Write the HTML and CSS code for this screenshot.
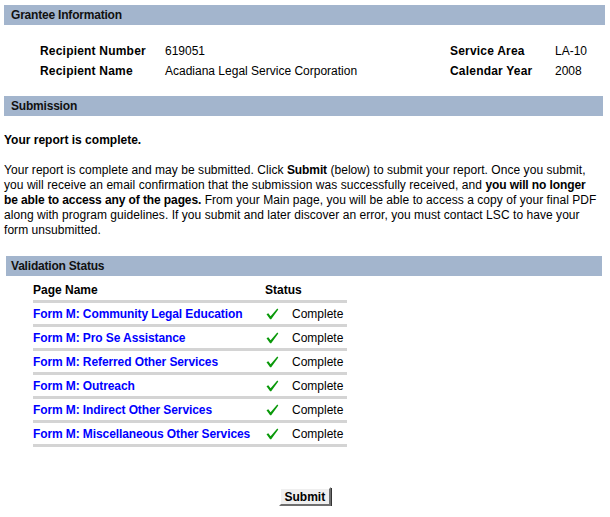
FILE: index.html
```html
<!DOCTYPE html>
<html>
<head>
<meta charset="utf-8">
<link rel="stylesheet" href="styles.css">
</head>
<body>
<div class="page">
  <div class="bar bar-grantee">Grantee Information</div>
  <div class="info">
    <div class="lbl">Recipient Number</div><div class="val">619051</div>
    <div class="lbl">Service Area</div><div class="val">LA-10</div>
    <div class="lbl">Recipient Name</div><div class="val">Acadiana Legal Service Corporation</div>
    <div class="lbl">Calendar Year</div><div class="val">2008</div>
  </div>
  <div class="bar bar-sub">Submission</div>
  <div class="complete">Your report is complete.</div>
  <p class="para">Your report is complete and may be submitted. Click <b>Submit</b> (below) to submit your report. Once you submit,<br>you will receive an email confirmation that the submission was successfully received, and <b>you will no longer<br>be able to access any of the pages.</b> From your Main page, you will be able to access a copy of your final PDF<br>along with program guidelines. If you submit and later discover an error, you must contact LSC to have your<br>form unsubmitted.</p>
  <div class="bar bar-val">Validation Status</div>
  <div class="vtable">
    <div class="vrow vhead"><div class="c-name">Page Name</div><div class="c-status">Status</div></div>
    <div class="vrow"><a class="c-name" href="#">Form M: Community Legal Education</a><div class="c-check"><svg width="13" height="12" viewBox="0 0 13 12"><path d="M0.5 6.2 L2.3 5.2 L4.6 8.2 L11.3 0.6 L12.3 1.4 L5.2 11.3 L4.1 11.3 Z" fill="#0a990a"/></svg></div><div class="c-text">Complete</div></div>
    <div class="vrow"><a class="c-name" href="#">Form M: Pro Se Assistance</a><div class="c-check"><svg width="13" height="12" viewBox="0 0 13 12"><path d="M0.5 6.2 L2.3 5.2 L4.6 8.2 L11.3 0.6 L12.3 1.4 L5.2 11.3 L4.1 11.3 Z" fill="#0a990a"/></svg></div><div class="c-text">Complete</div></div>
    <div class="vrow"><a class="c-name" href="#">Form M: Referred Other Services</a><div class="c-check"><svg width="13" height="12" viewBox="0 0 13 12"><path d="M0.5 6.2 L2.3 5.2 L4.6 8.2 L11.3 0.6 L12.3 1.4 L5.2 11.3 L4.1 11.3 Z" fill="#0a990a"/></svg></div><div class="c-text">Complete</div></div>
    <div class="vrow"><a class="c-name" href="#">Form M: Outreach</a><div class="c-check"><svg width="13" height="12" viewBox="0 0 13 12"><path d="M0.5 6.2 L2.3 5.2 L4.6 8.2 L11.3 0.6 L12.3 1.4 L5.2 11.3 L4.1 11.3 Z" fill="#0a990a"/></svg></div><div class="c-text">Complete</div></div>
    <div class="vrow"><a class="c-name" href="#">Form M: Indirect Other Services</a><div class="c-check"><svg width="13" height="12" viewBox="0 0 13 12"><path d="M0.5 6.2 L2.3 5.2 L4.6 8.2 L11.3 0.6 L12.3 1.4 L5.2 11.3 L4.1 11.3 Z" fill="#0a990a"/></svg></div><div class="c-text">Complete</div></div>
    <div class="vrow"><a class="c-name" href="#">Form M: Miscellaneous Other Services</a><div class="c-check"><svg width="13" height="12" viewBox="0 0 13 12"><path d="M0.5 6.2 L2.3 5.2 L4.6 8.2 L11.3 0.6 L12.3 1.4 L5.2 11.3 L4.1 11.3 Z" fill="#0a990a"/></svg></div><div class="c-text">Complete</div></div>
  </div>
  <div class="actions"><button class="submit" type="button">Submit</button></div>
</div>
</body>
</html>
```
FILE: styles.css
```css
html, body {
  margin: 0;
  padding: 0;
  background: #fff;
}
body {
  font-family: "Liberation Sans", Arial, sans-serif;
  font-size: 12px;
  color: #000;
}
.page {
  padding: 5px 5px 0 4px;
}
.bar {
  background: #a3b5cd;
  height: 20px;
  line-height: 20px;
  font-weight: bold;
  padding-left: 7px;
  color: #111;
  letter-spacing: -0.2px;
}
.bar-sub { margin-top: 15px; margin-right: 2px; }
.bar-val { margin: 0 3px 0 2px; padding-left: 5px; }
.info {
  display: grid;
  grid-template-columns: 125px 285px 105px auto;
  margin: 16px 0 0 36px;
  line-height: 20px;
}
.lbl { font-weight: bold; letter-spacing: 0.2px; }
.complete {
  font-weight: bold;
  margin-top: 17px;
  line-height: 15px;
}
.para {
  margin: 15px 0 18px 0;
  line-height: 15px;
  white-space: nowrap;
  letter-spacing: 0.05px;
}
.para b { letter-spacing: -0.1px; }
.vtable {
  margin: 4px 0 0 29px;
  width: 314px;
}
.vrow {
  display: flex;
  align-items: center;
  height: 21px;
  border-bottom: 3px solid #d4d4d4;
}
.vhead {
  font-weight: bold;
  height: 20px;
}
.c-name {
  width: 232px;
  font-weight: bold;
  color: #0000ff;
  text-decoration: none;
  letter-spacing: -0.1px;
}
.vhead .c-name { color: #000; letter-spacing: 0; }
.c-check {
  width: 27px;
  display: flex;
  align-items: center;
  padding-left: 1px;
  box-sizing: border-box;
}
.c-check svg { display: block; }
.actions {
  display: flex;
  justify-content: center;
  margin-top: 40px;
}
.submit {
  font-family: "Liberation Sans", Arial, sans-serif;
  font-size: 12px;
  font-weight: bold;
  background: #efefef;
  border: 2px solid;
  border-color: #fff #6e6e6e #6e6e6e #fff;
  box-shadow: 1px 1px 0 #333;
  padding: 0 4px;
  height: 19px;
  width: 52px;
  color: #000;
}
```
